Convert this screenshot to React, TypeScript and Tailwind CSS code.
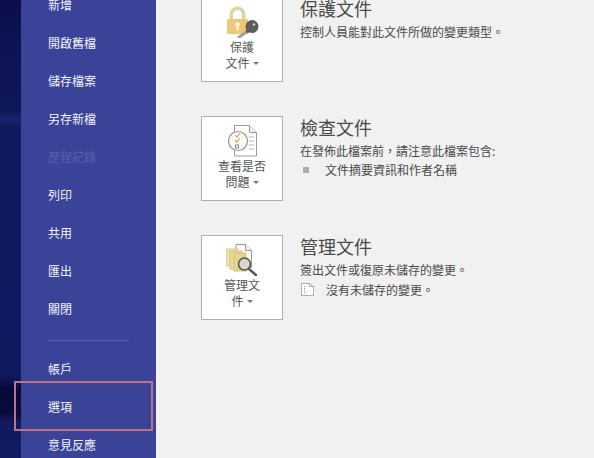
const topItems = [
  { label: "新增" },
  { label: "開啟舊檔" },
  { label: "儲存檔案" },
  { label: "另存新檔" },
  { label: "歷程記錄", disabled: true },
  { label: "列印" },
  { label: "共用" },
  { label: "匯出" },
  { label: "關閉" },
];

const bottomItems = ["帳戶", "選項", "意見反應"];

function NavItem({ label, disabled }: { label: string; disabled?: boolean }) {
  return (
    <div className={`h-[38px] flex items-center pl-[27px] text-[12px] ${disabled ? "text-[#5760ab]" : "text-[#f2f3fa]"}`}>
      {label}
    </div>
  );
}

function Caret() {
  return <span className="inline-block ml-[3px] mb-[2px] align-middle border-x-[3px] border-x-transparent border-t-[3px] border-t-[#777]" />;
}

function LockIcon() {
  return (
    <svg width="33" height="32" viewBox="0 0 33 32">
      <path d="M3.500 14V8.500a8 8 0 0 1 16 0V14H16V8.500a4.500 4.500 0 0 0-9 0V14z" fill="#e3d2a0" />
      <rect x="1" y="13" width="21" height="15" rx="1.500" fill="#eec877" />
      <circle cx="11.500" cy="18.500" r="2.300" fill="#fff6dc" />
      <rect x="10.500" y="19.500" width="2" height="5.500" fill="#fff6dc" />
      <path d="M21.500 25L12 32" stroke="#9d9d9d" strokeWidth="3" />
      <circle cx="26" cy="20.500" r="6.500" fill="#5c5c5c" />
      <path d="M19.500 24l3-1.500 2 3-3 2z" fill="#5c5c5c" />
      <circle cx="28" cy="18.500" r="1.200" fill="#d9d9d9" />
    </svg>
  );
}

function InspectIcon() {
  return (
    <svg width="29" height="32" viewBox="0 0 29 32">
      <path d="M6.500 .5h15l7 7v23.500h-22z" fill="#fff" stroke="#9a9a9a" />
      <path d="M21.500 .5v7h7" fill="#f1f1f1" stroke="#9a9a9a" />
      <path d="M21 12h5M21 16h5M21 20h5M21 24h5" stroke="#b5b5b5" />
      <circle cx="10" cy="16" r="9.500" fill="#fbfaf3" stroke="#969696" strokeWidth="1.200" />
      <path d="M7 10l1.800 2 3-3.500M7 15l1.800 2 3-3.500" fill="none" stroke="#c9985c" strokeWidth="1.100" />
      <rect x="7.500" y="20" width="3" height="3" fill="none" stroke="#888" />
    </svg>
  );
}

function ManageIcon() {
  return (
    <svg width="32" height="32" viewBox="0 0 32 32">
      <path d="M10 .5h9.500l6 6v17H10z" fill="#fff" stroke="#999" />
      <path d="M19.500 .5v6h6" fill="#f1f1f1" stroke="#999" />
      <rect x="0" y="5" width="12" height="17" fill="#ecdfa9" stroke="#d8ca8e" />
      <rect x="4" y="7" width="12" height="18" fill="#e9dba0" stroke="#d3c483" />
      <rect x="8" y="9" width="12" height="18" fill="#e4d48f" stroke="#cfbe7b" />
      <circle cx="18.500" cy="20" r="6" fill="#d9d5c8" stroke="#555" strokeWidth="1.600" />
      <path d="M23 25l7 6" stroke="#555" strokeWidth="2.400" strokeLinecap="round" />
    </svg>
  );
}

function ActionCard({ icon, lines }: { icon: React.ReactNode; lines: string[] }) {
  return (
    <div className="w-[82px] h-[85px] shrink-0 bg-white border border-[#b0b0b0] flex flex-col items-center justify-end pb-[11px] text-[12px] leading-[15.500px] text-[#555]">
      <div className="h-[38px] flex items-end justify-center mb-[1px]">{icon}</div>
      <div>{lines[0]}</div>
      <div>
        {lines[1]}
        <Caret />
      </div>
    </div>
  );
}

function Section({ icon, lines, title, children }: { icon: React.ReactNode; lines: string[]; title: string; children: React.ReactNode }) {
  return (
    <div className="flex h-[85px] mb-[34px]">
      <ActionCard icon={icon} lines={lines} />
      <div className="ml-[18px] -mt-[2px]">
        <h2 className="text-[18px] leading-[26px] font-normal text-[#4a4a4a] -ml-px mb-px">{title}</h2>
        <div className="text-[12px] leading-[19px] text-[#4a4a4a] -ml-px">{children}</div>
      </div>
    </div>
  );
}

export default function App() {
  return (
    <div
      className="relative flex w-[594px] h-[458px] overflow-hidden bg-[#f1f1f1]"
      style={{ fontFamily: '"Noto Sans CJK TC", "Noto Sans", sans-serif' }}
    >
      {/* dark strip left of the menu */}
      <div className="w-[21px] shrink-0 bg-[linear-gradient(180deg,#0b0e4a_0%,#0e1558_15%,#0e1759_24%,#16226b_26%,#0f1a5e_28%,#101a62_70%,#10195c_82%,#09093a_85%,#0a0a3c_90%,#111a5c_92%,#121b60_100%)]" />

      <nav className="w-[135px] shrink-0 bg-[#3b4398] -mt-[14px]">
        {topItems.map((item) => (
          <NavItem key={item.label} label={item.label} disabled={item.disabled} />
        ))}
        <div className="ml-[27px] w-[81px] h-px bg-[#5a63ad] mt-[12px] mb-[9px]" />
        {bottomItems.map((label) => (
          <NavItem key={label} label={label} />
        ))}
      </nav>

      <main className="flex-1 pl-[45px] -mt-[3px]">
        <Section icon={<LockIcon />} lines={["保護", "文件"]} title="保護文件">
          控制人員能對此文件所做的變更類型。
        </Section>
        <Section icon={<InspectIcon />} lines={["查看是否", "問題"]} title="檢查文件">
          <div>在發佈此檔案前，請注意此檔案包含:</div>
          <div className="flex items-center">
            <span className="w-[6px] h-[6px] bg-[#ababab] ml-[3px] mr-[16px]" />
            文件摘要資訊和作者名稱
          </div>
        </Section>
        <Section icon={<ManageIcon />} lines={["管理文", "件"]} title="管理文件">
          <div>簽出文件或復原未儲存的變更。</div>
          <div className="flex items-center mt-px">
            <svg width="15" height="15" viewBox="0 0 15 15" className="mr-[11px]">
              <path d="M1.500 1.500h8l4 3v9h-12z" fill="#fff" stroke="#666" strokeDasharray="1 1" />
              <path d="M9.500 1.500v3h4" fill="none" stroke="#666" strokeDasharray="1 1" />
              <path d="M4.500 4v8" stroke="#999" strokeDasharray="1 1" />
            </svg>
            沒有未儲存的變更。
          </div>
        </Section>
      </main>

      {/* highlight annotation over the 選項 row */}
      <div className="absolute left-[14px] top-[381px] w-[139px] h-[50px] border-2 border-[#bb7385]" />
    </div>
  );
}
